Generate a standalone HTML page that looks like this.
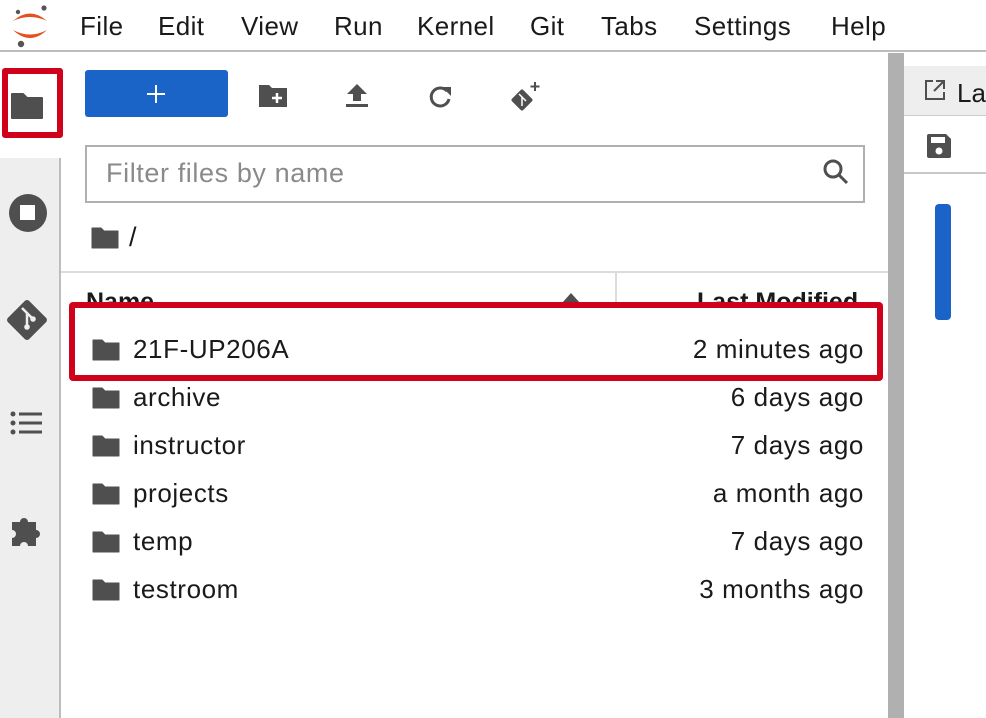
<!DOCTYPE html>
<html><head><meta charset="utf-8"><style>
*{margin:0;padding:0;box-sizing:border-box}
body{width:986px;height:718px;overflow:hidden;background:#fff;font-family:"Liberation Sans",Helvetica,Arial,sans-serif;color:#1a1a1a;position:relative}
.a{position:absolute}
.menu{top:0;left:0;width:986px;height:52px;border-bottom:2px solid #bdbdbd;background:#fff}
.menu span{position:absolute;top:11px;font-size:26px;color:#1a1a1a;letter-spacing:0.4px}
.side{left:0;top:158px;width:61px;height:560px;background:#eee;border-right:2px solid #bdbdbd}
.row{left:61px;width:827px;height:48px}
.row .ic{position:absolute;left:31px;top:14px}
.row .n{position:absolute;left:72px;top:9px;font-size:26px;letter-spacing:0.6px}
.row .d{position:absolute;right:24px;top:9px;font-size:26px;letter-spacing:0.6px}
</style></head><body>
<div class="a menu">
<svg class="a" style="left:6px;top:2px" width="42" height="48" viewBox="0 0 42 48">
<circle cx="12" cy="10" r="2.2" fill="#555"/>
<circle cx="38" cy="6" r="2.6" fill="#555"/>
<circle cx="15" cy="42" r="3.2" fill="#555"/>
<path d="M7 19 Q24 4 41 19 Q24 11 7 19Z" fill="#e4511e"/>
<path d="M7 28 Q24 44 41 28 Q24 37 7 28Z" fill="#e4511e"/>
</svg>
<span style="left:80px">File</span><span style="left:158px">Edit</span><span style="left:241px">View</span><span style="left:334px">Run</span><span style="left:417px">Kernel</span><span style="left:530px">Git</span><span style="left:601px">Tabs</span><span style="left:694px">Settings</span><span style="left:831px">Help</span>
</div>
<div class="a" style="left:2px;top:68px;width:61px;height:70px;border:6px solid #d0021b;border-radius:3px"></div>
<svg class="a" style="left:10px;top:92px" width="34" height="28" viewBox="0 0 34 28"><path d="M2 2h11l4 4h15v20H2z" fill="#4f4f4f" stroke="#4f4f4f" stroke-width="2" stroke-linejoin="round"/></svg>
<div class="a side"></div>
<svg class="a" style="left:8px;top:193px" width="40" height="40" viewBox="0 0 40 40"><circle cx="20" cy="20" r="19" fill="#4f4f4f"/><rect x="12" y="12" width="15" height="15" fill="#fff"/></svg>
<svg class="a" style="left:4px;top:297px" width="46" height="46" viewBox="0 0 46 46"><rect x="8" y="8" width="30" height="30" rx="3" fill="#4f4f4f" transform="rotate(45 23 23)"/><path d="M18 11l10 10M23 16v13" stroke="#eee" stroke-width="2.5" fill="none"/><circle cx="23" cy="30" r="2.8" fill="#eee"/><circle cx="29" cy="22" r="2.8" fill="#eee"/></svg>
<svg class="a" style="left:10px;top:410px" width="34" height="28" viewBox="0 0 34 28"><g fill="#4f4f4f"><circle cx="3" cy="4" r="2.5"/><circle cx="3" cy="13" r="2.5"/><circle cx="3" cy="22" r="2.5"/><rect x="9" y="2.5" width="23" height="3"/><rect x="9" y="11.5" width="23" height="3"/><rect x="9" y="20.5" width="23" height="3"/></g></svg>
<svg class="a" style="left:9px;top:512px" width="38" height="38" viewBox="0 0 38 38"><path d="M3 10h8a4 4 0 1 1 8 0h8v8a4 4 0 1 1 0 8v8H19a4 4 0 1 0-8 0H3v-8a4 4 0 1 0 0-8z" fill="#4f4f4f"/></svg>
<div class="a" style="left:85px;top:70px;width:143px;height:47px;background:#1a64c8;border-radius:3px"></div>
<svg class="a" style="left:146px;top:84px" width="20" height="20"><path d="M10 1v18M1 10h18" stroke="#fff" stroke-width="2"/></svg>
<svg class="a" style="left:258px;top:84px" width="30" height="24" viewBox="0 0 30 24"><path d="M1 1h10l3 3h15v19H1z" fill="#4f4f4f"/><path d="M19 9v10M14 14h10" stroke="#fff" stroke-width="2.5"/></svg>
<svg class="a" style="left:345px;top:83px" width="24" height="26" viewBox="0 0 24 26"><path d="M12 1l10 10h-6v7H8v-7H2z" fill="#4f4f4f"/><rect x="1" y="21" width="22" height="3" fill="#4f4f4f"/></svg>
<svg class="a" style="left:428px;top:84px" width="26" height="26" viewBox="0 0 26 26"><path d="M19 7A9 9 0 1 0 21 15" stroke="#4f4f4f" stroke-width="3" fill="none"/><path d="M14 3h9v9z" fill="#4f4f4f"/></svg>
<svg class="a" style="left:508px;top:80px" width="34" height="34" viewBox="0 0 34 34"><rect x="6" y="12" width="16" height="16" rx="2" fill="#4f4f4f" transform="rotate(45 14 20)"/><path d="M11 14l7 7M14 17v9" stroke="#fff" stroke-width="1.5"/><path d="M27 2v9M22.5 6.5h9" stroke="#4f4f4f" stroke-width="2"/></svg>
<div class="a" style="left:85px;top:145px;width:780px;height:58px;border:2px solid #b0b0b0"></div>
<div class="a" style="left:106px;top:158px;font-size:27px;color:#8a8a8a;letter-spacing:0.6px">Filter files by name</div>
<svg class="a" style="left:822px;top:158px" width="28" height="28" viewBox="0 0 28 28"><circle cx="11" cy="11" r="8" stroke="#4f4f4f" stroke-width="3" fill="none"/><path d="M17 17l8 8" stroke="#4f4f4f" stroke-width="3"/></svg>
<svg class="a" style="left:91px;top:227px" width="28" height="22" viewBox="0 0 28 22"><path d="M1 1h9l3 3h14v17H1z" fill="#4f4f4f" stroke="#4f4f4f" stroke-linejoin="round"/></svg>
<div class="a" style="left:129px;top:222px;font-size:27px">/</div>
<div class="a" style="left:61px;top:271px;width:827px;height:52px;border-top:2px solid #dcdcdc;border-bottom:2px solid #c8c8c8"></div>
<div class="a" style="left:615px;top:273px;width:2px;height:48px;background:#dcdcdc"></div>
<div class="a" style="left:86px;top:288px;font-size:25px;font-weight:bold">Name</div>
<div class="a" style="left:697px;top:288px;font-size:25px;font-weight:bold">Last Modified</div>
<svg class="a" style="left:561px;top:292px" width="20" height="12"><path d="M1 11L10 1l9 10z" fill="#4f4f4f"/></svg>
<div class="a" style="left:61px;top:306px;width:827px;height:17px;background:#fff"></div>
<div class="a row" style="top:325px"><svg class="ic" width="28" height="22" viewBox="0 0 28 22"><path d="M1 1h9l3 3h14v17H1z" fill="#4f4f4f" stroke="#4f4f4f" stroke-linejoin="round"/></svg><span class="n">21F-UP206A</span><span class="d">2 minutes ago</span></div>
<div class="a row" style="top:373px"><svg class="ic" width="28" height="22" viewBox="0 0 28 22"><path d="M1 1h9l3 3h14v17H1z" fill="#4f4f4f" stroke="#4f4f4f" stroke-linejoin="round"/></svg><span class="n">archive</span><span class="d">6 days ago</span></div>
<div class="a row" style="top:421px"><svg class="ic" width="28" height="22" viewBox="0 0 28 22"><path d="M1 1h9l3 3h14v17H1z" fill="#4f4f4f" stroke="#4f4f4f" stroke-linejoin="round"/></svg><span class="n">instructor</span><span class="d">7 days ago</span></div>
<div class="a row" style="top:469px"><svg class="ic" width="28" height="22" viewBox="0 0 28 22"><path d="M1 1h9l3 3h14v17H1z" fill="#4f4f4f" stroke="#4f4f4f" stroke-linejoin="round"/></svg><span class="n">projects</span><span class="d">a month ago</span></div>
<div class="a row" style="top:517px"><svg class="ic" width="28" height="22" viewBox="0 0 28 22"><path d="M1 1h9l3 3h14v17H1z" fill="#4f4f4f" stroke="#4f4f4f" stroke-linejoin="round"/></svg><span class="n">temp</span><span class="d">7 days ago</span></div>
<div class="a row" style="top:565px"><svg class="ic" width="28" height="22" viewBox="0 0 28 22"><path d="M1 1h9l3 3h14v17H1z" fill="#4f4f4f" stroke="#4f4f4f" stroke-linejoin="round"/></svg><span class="n">testroom</span><span class="d">3 months ago</span></div>
<div class="a" style="left:69px;top:302px;width:814px;height:79px;border:6px solid #d0021b;border-radius:4px"></div>
<div class="a" style="left:888px;top:53px;width:16px;height:665px;background:#b0b0b0"></div>
<div class="a" style="left:904px;top:66px;width:82px;height:50px;background:#eee;border-bottom:1px solid #ccc"></div>
<svg class="a" style="left:924px;top:79px" width="22" height="22" viewBox="0 0 22 22"><path d="M9 2H2v18h18v-7" stroke="#4f4f4f" stroke-width="2" fill="none"/><path d="M12 2h8v8M20 2L10 12" stroke="#4f4f4f" stroke-width="2" fill="none"/></svg>
<div class="a" style="left:957px;top:78px;font-size:26px">La</div>
<div class="a" style="left:904px;top:172px;width:82px;height:2px;background:#c8c8c8"></div>
<svg class="a" style="left:926px;top:133px" width="26" height="26" viewBox="0 0 26 26"><path d="M1 3a2 2 0 0 1 2-2h17l5 5v17a2 2 0 0 1-2 2H3a2 2 0 0 1-2-2z" fill="#4f4f4f"/><rect x="5" y="4" width="14" height="6" fill="#fff"/><circle cx="13" cy="18" r="3.5" fill="#fff"/></svg>
<div class="a" style="left:935px;top:204px;width:16px;height:116px;background:#1a64c8;border-radius:4px"></div>
</body></html>
